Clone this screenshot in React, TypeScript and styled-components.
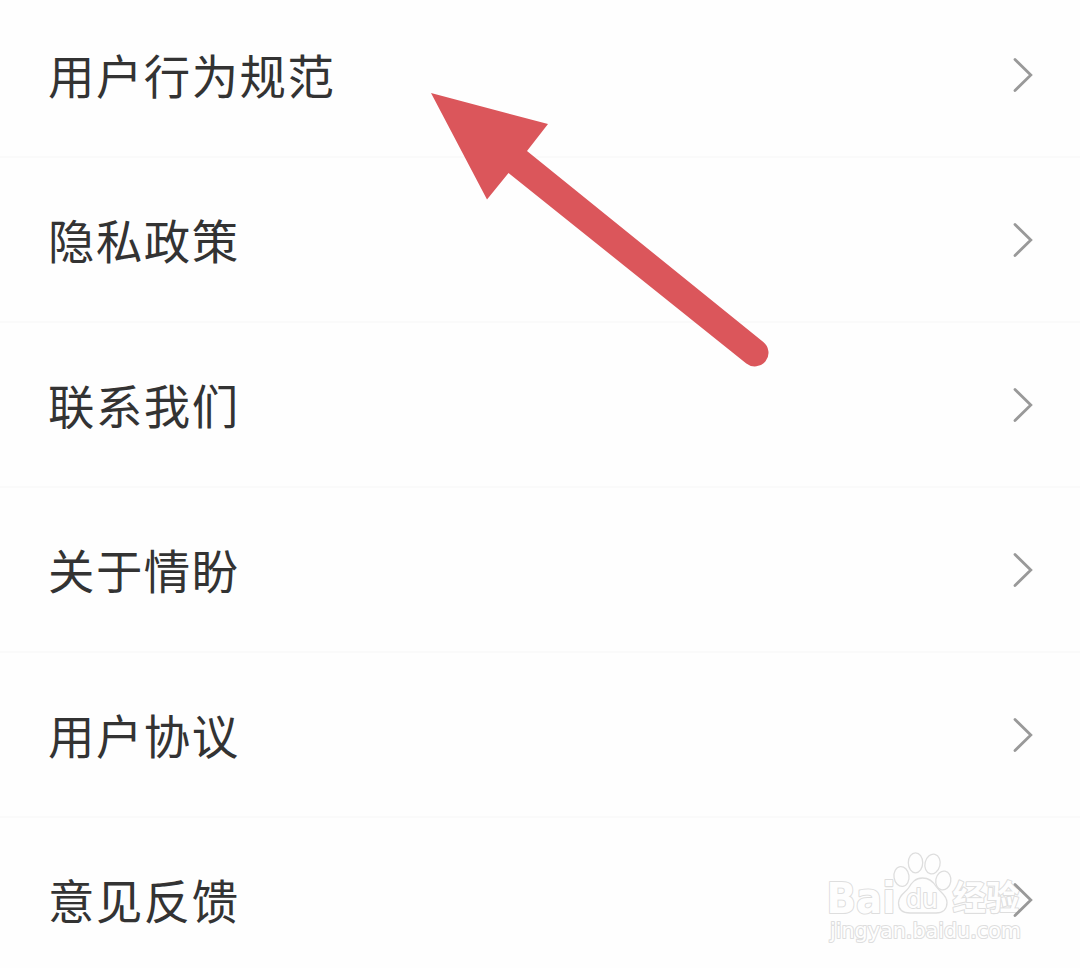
import styled, { createGlobalStyle } from 'styled-components';

const GlobalStyle = createGlobalStyle`
  * {
    box-sizing: border-box;
  }

  body {
    margin: 0;
    background: #fefefe;
    overflow: hidden;
  }
`;

const Page = styled.main`
  position: relative;
  width: 1080px;
  height: 968px;
  overflow: hidden;
  background: #fefefe;
  font-family: 'Noto Sans CJK SC', sans-serif;
`;

const List = styled.ul`
  position: relative;
  z-index: 1;
  margin: -7px 0 0;
  padding: 0;
  list-style: none;
`;

const Row = styled.li`
  display: flex;
  align-items: center;
  justify-content: space-between;
  height: 165px;
  padding: 0 47px 0 48px;
  border-bottom: 2px solid #fafafa;
`;

const Label = styled.span`
  margin-top: -2px;
  color: #333;
  font-size: 46.4px;
  line-height: 72px;
  letter-spacing: 1.5px;
`;

const Chevron = styled.svg`
  width: 20px;
  height: 36px;
  fill: none;
  stroke: #999;
  stroke-width: 2.8;
  stroke-linecap: round;
`;

const Arrow = styled.svg`
  position: absolute;
  z-index: 2;
  top: 80px;
  left: 420px;
  width: 360px;
  height: 300px;
  fill: #db565b;
`;

const Watermark = styled.svg`
  position: absolute;
  top: 840px;
  left: 820px;
  width: 220px;
  height: 120px;
  fill: #fefefe;
  stroke: #dedede;
  stroke-width: 1.3;
  stroke-linejoin: round;

  text {
    paint-order: stroke;
    stroke-width: 2.2;
  }
`;

const items = ['用户行为规范', '隐私政策', '联系我们', '关于情盼', '用户协议', '意见反馈'];

const BaiduWatermark = () => (
  <Watermark viewBox="0 0 220 120" aria-hidden="true">
    <text x="6.500" y="72.500" fontFamily="DejaVu Sans, sans-serif" fontWeight="700" fontSize="42" textLength="69" lengthAdjust="spacingAndGlyphs">
      Bai
    </text>
    <ellipse cx="81.500" cy="36.500" rx="7.500" ry="10" transform="rotate(-8 81.500 36.500)" />
    <ellipse cx="95.500" cy="22.800" rx="7.200" ry="10" />
    <ellipse cx="112.500" cy="24" rx="7.500" ry="10" transform="rotate(14 112.500 24)" />
    <ellipse cx="123.300" cy="40.500" rx="7.500" ry="9.500" transform="rotate(10 123.300 40.500)" />
    <path d="M102.500 38C95 38 91.500 43 88.500 48C85 53 78.500 55 78.500 63C78.500 70 82.500 73 90 73H116C123 73 127 69 127 62.500C127 55 120 52 116.500 47C113 41 109 38 102.500 38Z" />
    <text x="86" y="68" fontFamily="DejaVu Sans, sans-serif" fontSize="26" textLength="32" lengthAdjust="spacingAndGlyphs">
      du
    </text>
    <text x="132.500" y="69.500" fontFamily="Noto Sans CJK SC, sans-serif" fontWeight="700" fontSize="34" textLength="67" lengthAdjust="spacingAndGlyphs">
      经验
    </text>
    <text x="10" y="98" fontFamily="DejaVu Sans, sans-serif" fontSize="21.500" textLength="191" lengthAdjust="spacingAndGlyphs">
      jingyan.baidu.com
    </text>
  </Watermark>
);

export default function App() {
  return (
    <>
      <GlobalStyle />
      <Page>
        <List>
          {items.map(item => (
            <Row key={item}>
              <Label>{item}</Label>
              <Chevron viewBox="0 0 20 36" aria-hidden="true">
                <path d="M2 2.500L17.800 18L2 33.500" />
              </Chevron>
            </Row>
          ))}
        </List>
        <BaiduWatermark />
        <Arrow viewBox="420 80 360 300" aria-hidden="true">
          <path d="M431 93L548 124L527 151L763.300 342A13.500 13.500 0 0 1 746.300 363.500L508.500 173L487 199.500Z" />
        </Arrow>
      </Page>
    </>
  );
}
